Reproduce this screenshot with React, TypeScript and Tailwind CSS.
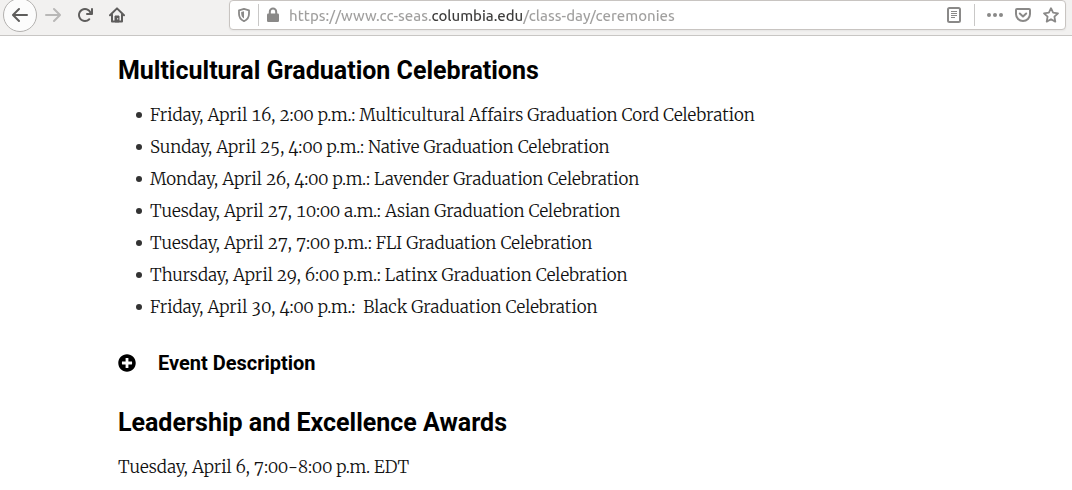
import { useState } from 'react';
import { FaMinusCircle, FaPlusCircle } from 'react-icons/fa';

const celebrations = [
  'Friday, April 16, 2:00 p.m.: Multicultural Affairs Graduation Cord Celebration',
  'Sunday, April 25, 4:00 p.m.: Native Graduation Celebration',
  'Monday, April 26, 4:00 p.m.: Lavender Graduation Celebration',
  'Tuesday, April 27, 10:00 a.m.: Asian Graduation Celebration',
  'Tuesday, April 27, 7:00 p.m.: FLI Graduation Celebration',
  'Thursday, April 29, 6:00 p.m.: Latinx Graduation Celebration',
  'Friday, April 30, 4:00 p.m.:\u00a0 Black Graduation Celebration',
];

const BackIcon = () => (
  <svg viewBox="0 0 16 16" className="size-4" fill="currentColor" aria-hidden="true">
    <path d="M15 7H3.414l4.293-4.293a1 1 0 0 0-1.414-1.414l-6 6a1 1 0 0 0 0 1.414l6 6a1 1 0 0 0 1.414-1.414L3.414 9H15a1 1 0 0 0 0-2z" />
  </svg>
);

const ForwardIcon = () => (
  <svg viewBox="0 0 16 16" className="size-4" fill="currentColor" aria-hidden="true">
    <path d="M1 7h11.586L8.293 2.707a1 1 0 0 1 1.414-1.414l6 6a1 1 0 0 1 0 1.414l-6 6a1 1 0 0 1-1.414-1.414L12.586 9H1a1 1 0 0 1 0-2z" />
  </svg>
);

const ReloadIcon = () => (
  <svg viewBox="0 0 16 16" className="size-4" fill="currentColor" aria-hidden="true">
    <path d="M15 1a1 1 0 0 0-1 1v2.418A6.995 6.995 0 1 0 8 15a6.954 6.954 0 0 0 4.95-2.05 1 1 0 0 0-1.414-1.414A5.019 5.019 0 1 1 12.549 6H10a1 1 0 0 0 0 2h5a1 1 0 0 0 1-1V2a1 1 0 0 0-1-1z" />
  </svg>
);

const HomeIcon = () => (
  <svg
    viewBox="0 0 16 16"
    className="size-4"
    fill="none"
    stroke="currentColor"
    strokeWidth="2"
    strokeLinecap="round"
    strokeLinejoin="round"
    aria-hidden="true"
  >
    <path d="M1 8.2 8 1.4l7 6.8M3 7.5V14.5h10V7.5" />
    <path d="M6 14.5V9h4v5.5z" fill="currentColor" strokeWidth="1" />
    <path d="M8.7 11.5v.6" stroke="#f2f1f0" strokeWidth="1" />
  </svg>
);

const ShieldIcon = () => (
  <svg viewBox="0 0 16 16" className="size-4" fill="none" aria-hidden="true">
    <path
      d="M8 1.9 13 3.3v3.4c0 3.5-1.7 6-5 7.5-3.3-1.5-5-4-5-7.5V3.3z"
      stroke="currentColor"
      strokeWidth="1.8"
      strokeLinejoin="round"
    />
    <path d="M8 4.3v7.3C6.1 10.4 5.2 8.8 5.2 6.6V5.1z" fill="currentColor" />
  </svg>
);

const LockIcon = () => (
  <svg viewBox="0 0 16 16" className="size-4" fill="none" aria-hidden="true">
    <path d="M4.8 8V4.8a3.2 3.2 0 0 1 6.4 0V8" stroke="currentColor" strokeWidth="2" />
    <rect x="2" y="6.5" width="12" height="8.5" rx="1.2" fill="currentColor" />
  </svg>
);

const ReaderIcon = () => (
  <svg viewBox="0 0 16 16" className="size-4" fill="none" stroke="currentColor" aria-hidden="true">
    <rect x="2" y="1" width="12" height="14" rx="1.5" strokeWidth="2" />
    <path d="M5 4.5h6M5 6.5h6M5 8.5h6M5 10.5h4" />
  </svg>
);

const MoreIcon = () => (
  <svg viewBox="0 0 16 16" className="size-4" fill="currentColor" aria-hidden="true">
    <circle cx="2" cy="8" r="2" />
    <circle cx="8" cy="8" r="2" />
    <circle cx="14" cy="8" r="2" />
  </svg>
);

const PocketIcon = () => (
  <svg
    viewBox="0 0 16 16"
    className="size-4"
    fill="none"
    stroke="currentColor"
    strokeWidth="2"
    strokeLinecap="round"
    strokeLinejoin="round"
    aria-hidden="true"
  >
    <path d="M2 2h12a1 1 0 0 1 1 1v4a7 7 0 0 1-14 0V3a1 1 0 0 1 1-1z" />
    <path d="M4.8 6.5 8 9.5l3.2-3" />
  </svg>
);

const StarIcon = () => (
  <svg
    viewBox="0 0 16 16"
    className="size-4"
    fill="none"
    stroke="currentColor"
    strokeWidth="1.8"
    strokeLinejoin="round"
    aria-hidden="true"
  >
    <path d="M8 1.2l2.1 4.5 4.9.6-3.6 3.4.9 4.9L8 12.2l-4.3 2.4.9-4.9L1 6.3l4.9-.6z" />
  </svg>
);

const BrowserBar = () => {
  const [url, setUrl] = useState('https://www.cc-seas.columbia.edu/class-day/ceremonies');

  return (
    <header className="flex items-center border-b border-[#c8c6c4] bg-[#f2f1f0] pr-[6px] pb-[5px] text-[#5e5d5c]">
      <nav className="flex h-[30px] shrink-0 items-center gap-4 pl-[3px]" aria-label="Browser">
        <button
          type="button"
          aria-label="Back"
          className="-mr-2 flex size-[34px] items-center justify-center rounded-full border border-[#b3b1af] bg-[#fcfcfc]"
        >
          <BackIcon />
        </button>
        <button type="button" aria-label="Forward" disabled className="text-[#b9b8b7]">
          <ForwardIcon />
        </button>
        <button type="button" aria-label="Reload">
          <ReloadIcon />
        </button>
        <button type="button" aria-label="Home">
          <HomeIcon />
        </button>
      </nav>
      <div className="ml-[104px] flex h-[30px] min-w-0 flex-1 items-center rounded-sm border border-[#c8c4c1] bg-white px-[6px] text-[#8a8988] shadow-xs">
        <button type="button" aria-label="Tracking protection">
          <ShieldIcon />
        </button>
        <span className="mx-[6px] h-[22px] w-px bg-[#c9c8c7]" />
        <button type="button" aria-label="Site information">
          <LockIcon />
        </button>
        {/* the domain part of the address is drawn darker than the rest */}
        <input
          type="text"
          aria-label="Address"
          spellCheck={false}
          value={url}
          onChange={(e) => setUrl(e.target.value)}
          className="ml-2 h-6 min-w-0 flex-1 bg-[linear-gradient(to_right,#a09f9e_142px,#3c3b3a_142px,#3c3b3a_234px,#a09f9e_234px)] bg-clip-text font-['Ubuntu','Noto_Sans',sans-serif] text-[15px] font-medium text-transparent caret-black outline-none"
        />
        <button type="button" aria-label="Reader view">
          <ReaderIcon />
        </button>
        <span className="mx-3 h-[22px] w-px bg-[#c9c8c7]" />
        <div className="flex items-center gap-3">
          <button type="button" aria-label="Page actions">
            <MoreIcon />
          </button>
          <button type="button" aria-label="Save to Pocket">
            <PocketIcon />
          </button>
          <button type="button" aria-label="Bookmark">
            <StarIcon />
          </button>
        </div>
      </div>
    </header>
  );
};

const EventDescription = () => {
  const [open, setOpen] = useState(false);

  return (
    <h3 className="mt-6 font-['Roboto',sans-serif] text-[20px] leading-8 font-bold text-black">
      <button
        type="button"
        aria-expanded={open}
        onClick={() => setOpen(!open)}
        className="flex items-center gap-[22px]"
      >
        {open ? <FaMinusCircle className="size-[18px]" /> : <FaPlusCircle className="size-[18px]" />}
        Event Description
      </button>
    </h3>
  );
};

export default function App() {
  return (
    <div className="min-h-screen bg-white">
      <BrowserBar />
      <main className="px-[11%] pt-[19px] font-['Merriweather','Liberation_Serif',serif] text-[17px] leading-8 font-light text-[#111] oldstyle-nums tabular-nums">
        <h2 className="font-['Roboto',sans-serif] text-[25px] leading-8 font-bold text-black">
          Multicultural Graduation Celebrations
        </h2>
        <ul className="mt-3 pl-[18px]">
          {celebrations.map((item) => (
            <li
              key={item}
              className="flex items-center gap-2 before:size-[6px] before:shrink-0 before:rounded-full before:bg-[#333]"
            >
              {item}
            </li>
          ))}
        </ul>
        <EventDescription />
        <h2 className="mt-7 font-['Roboto',sans-serif] text-[25px] leading-8 font-bold text-black">
          Leadership and Excellence Awards
        </h2>
        <p className="mt-3">Tuesday, April 6, 7:00-8:00 p.m. EDT</p>
      </main>
    </div>
  );
}
